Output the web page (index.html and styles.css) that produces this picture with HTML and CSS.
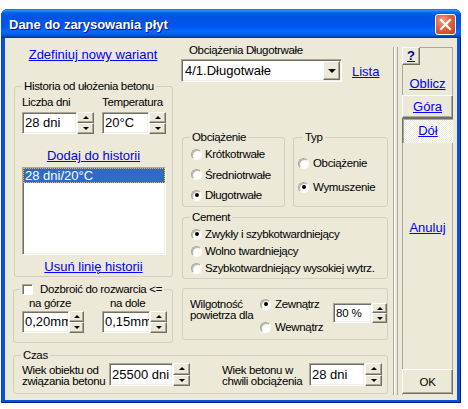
FILE: index.html
```html
<!DOCTYPE html>
<html lang="pl">
<head>
<meta charset="utf-8">
<title>Dane do zarysowania płyt</title>
<link rel="stylesheet" href="styles.css">
</head>
<body>
<div class="window">
  <div class="titlebar">
    <span class="title">Dane do zarysowania płyt</span>
    <span class="close"><svg width="13" height="13" viewBox="0 0 13 13"><path d="M2 2 L11 11 M11 2 L2 11" stroke="#fff" stroke-width="2.2" stroke-linecap="square"/></svg></span>
  </div>
  <div class="client">
    <div class="main">
      <div class="top">
        <div class="leftcol">
          <div class="linkrow"><a class="lnk">Zdefiniuj nowy wariant</a></div>
          <div class="group g-hist">
            <span class="cap">Historia od ułożenia betonu</span>
            <div class="labels"><span class="l1">Liczba dni</span><span>Temperatura</span></div>
            <div class="fields">
              <div class="field f-days"><span class="input">28 dni</span><span class="spin"><i class="up"></i><i class="dn"></i></span></div>
              <div class="field f-temp"><span class="input">20°C</span><span class="spin"><i class="up"></i><i class="dn"></i></span></div>
            </div>
            <a class="lnk hist-link add">Dodaj do historii</a>
            <div class="listbox"><div class="item">28 dni/20°C</div></div>
            <a class="lnk hist-link del">Usuń linię historii</a>
          </div>
          <div class="group g-dozb">
            <span class="cap cap-check"><span class="check"></span><span>Dozbroić do rozwarcia &lt;=</span></span>
            <div class="dozb-row">
              <div class="dcol d1"><span class="dlabel">na górze</span><div class="field f-g"><span class="input">0,20mm</span><span class="spin"><i class="up"></i><i class="dn"></i></span></div></div>
              <div class="dcol d2"><span class="dlabel">na dole</span><div class="field f-d"><span class="input">0,15mm</span><span class="spin"><i class="up"></i><i class="dn"></i></span></div></div>
            </div>
          </div>
        </div>
        <div class="midcol">
          <div class="mlabel">Obciążenia Długotrwałe</div>
          <div class="comborow">
            <div class="combo"><span class="ctext">4/1.Długotwałe</span><span class="cbtn"><i></i></span></div>
            <a class="lnk lista">Lista</a>
          </div>
          <div class="grow2">
            <div class="group g-obc">
              <span class="cap">Obciążenie</span>
              <div class="opts">
                <div class="opt"><span class="radio"></span>Krótkotrwałe</div>
                <div class="opt"><span class="radio"></span>Średniotrwałe</div>
                <div class="opt"><span class="radio on"></span>Długotrwałe</div>
              </div>
            </div>
            <div class="group g-typ">
              <span class="cap">Typ</span>
              <div class="opts">
                <div class="opt"><span class="radio"></span>Obciążenie</div>
                <div class="opt"><span class="radio on"></span>Wymuszenie</div>
              </div>
            </div>
          </div>
          <div class="group g-cem">
            <span class="cap">Cement</span>
            <div class="opts">
              <div class="opt"><span class="radio on"></span>Zwykły i szybkotwardniejący</div>
              <div class="opt"><span class="radio"></span>Wolno twardniejący</div>
              <div class="opt"><span class="radio"></span>Szybkotwardniejący wysokiej wytrz.</div>
            </div>
          </div>
          <div class="group g-wilg">
            <div class="wtext">Wilgotność<br>powietrza dla</div>
            <div class="wopts">
              <div class="opt"><span class="radio on"></span>Zewnątrz</div>
              <div class="opt"><span class="radio"></span>Wewnątrz</div>
            </div>
            <div class="field f-w"><span class="input">80 %</span><span class="spin"><i class="up"></i><i class="dn"></i></span></div>
          </div>
        </div>
      </div>
      <div class="group g-czas">
        <span class="cap">Czas</span>
        <div class="ctext1">Wiek obiektu od<br>związania betonu</div>
        <div class="field f-c1"><span class="input">25500 dni</span><span class="spin"><i class="up"></i><i class="dn"></i></span></div>
        <div class="ctext2">Wiek betonu w<br>chwili obciążenia</div>
        <div class="field f-c2"><span class="input">28 dni</span><span class="spin"><i class="up"></i><i class="dn"></i></span></div>
      </div>
    </div>
    <div class="sep"></div>
    <div class="panel">
      <span class="qbtn">?</span>
      <a class="lnk plink oblicz">Oblicz</a>
      <span class="pbtn gora"><a class="lnk">Góra</a></span>
      <span class="pbtn dol"><a class="lnk">Dół</a></span>
      <a class="lnk plink anuluj">Anuluj</a>
      <span class="pbtn ok">OK</span>
    </div>
  </div>
</div>
</body>
</html>
```
FILE: styles.css
```css
* { box-sizing: border-box; }
body { margin: 0; background: #fff; font-family: "Liberation Sans", Arial, sans-serif; }

.window {
  margin: 9px 0 0 1px;
  width: 460px;
  height: 394px;
  display: flex;
  flex-direction: column;
  background: #0652E0;
  border-radius: 7px 7px 0 0;
  box-shadow: inset 1px 0 #0A3FC4, inset -1px 0 #00138C, inset 0 -1px #00138C;
}
.titlebar {
  height: 29px;
  display: flex;
  align-items: center;
  padding: 0 5px 0 8px;
  border-radius: 7px 7px 0 0;
  background: linear-gradient(to bottom, #0058EE 0%, #3593FF 4%, #288EFF 6%, #127DFF 8%, #036FFC 10%, #0262EE 14%, #0057E5 20%, #0054E3 24%, #0055EB 56%, #005BF5 66%, #026AFE 76%, #0062EF 86%, #0052D6 92%, #0040AB 96%, #003092 100%);
}
.title {
  flex: 1;
  color: #fff;
  font: bold 13px "Liberation Sans", Arial, sans-serif;
  text-shadow: 1px 1px #0F1089;
  padding-top: 2px;
}
.close {
  width: 21px;
  height: 21px;
  border: 1px solid #fff;
  border-radius: 3px;
  background: radial-gradient(circle at 35% 30%, #F0A088 0%, #E0603A 45%, #C8401C 100%);
  display: flex;
  align-items: center;
  justify-content: center;
  margin-top: 1px;
}
.client {
  flex: 1;
  margin: 0 4px 3px 4px;
  background: #ECE9D8;
  display: flex;
  font: 11.5px/16px "Liberation Sans", Arial, sans-serif;
  letter-spacing: -0.35px;
  color: #000;
}

.lnk { color: #0000FF; text-decoration: underline; font: 13px/16px "Liberation Sans", Arial, sans-serif; letter-spacing: 0; cursor: pointer; }

.main { width: 388px; display: flex; flex-direction: column; }
.top { display: flex; height: 305px; }
.leftcol { width: 168px; padding-left: 8px; display: flex; flex-direction: column; }
.linkrow { height: 48px; padding-top: 9px; text-align: center; }

.group { position: relative; border: 1px solid #D0D0BF; border-radius: 3px; }
.cap {
  position: absolute;
  top: -8px;
  left: 7px;
  padding: 0 2px;
  background: #ECE9D8;
  line-height: 15px;
  white-space: nowrap;
}

/* inputs */
.field { display: flex; height: 22px; }
.input {
  flex: 1;
  min-width: 0;
  background: #fff;
  border: 1px solid;
  border-color: #ACA899 #fff #fff #ACA899;
  box-shadow: inset 1px 1px #716F64, inset -1px -1px #F1EFE2;
  font: 13px/20px "Liberation Sans", Arial, sans-serif;
  letter-spacing: 0;
  padding-left: 2px;
  white-space: nowrap;
  overflow: hidden;
}
.spin { display: flex; flex-direction: column; width: 17px; flex: none; }
.spin i {
  flex: 1;
  display: flex;
  align-items: center;
  justify-content: center;
  background: #ECE9D8;
  border: 1px solid;
  border-color: #fff #716F64 #716F64 #fff;
  box-shadow: inset -1px -1px #ACA899;
}
.spin i::before { content: ""; border-left: 3px solid transparent; border-right: 3px solid transparent; }
.spin .up::before { border-bottom: 3px solid #000; }
.spin .dn::before { border-top: 3px solid #000; }

/* historia */
.g-hist { margin-left: 1px; width: 159px; height: 191px; padding: 7px 0 0 7px; display: flex; flex-direction: column; }
.labels { display: flex; height: 16px; }
.l1 { width: 80px; }
.fields { margin-top: 2px; display: flex; }
.f-days { width: 72px; }
.f-temp { width: 64px; margin-left: 8px; }
.hist-link { display: block; margin-left: -7px; text-align: center; }
.add { margin-top: 14px; }
.listbox {
  margin-top: 3px;
  width: 144px;
  height: 88px;
  background: #fff;
  border: 1px solid;
  border-color: #ACA899 #fff #fff #ACA899;
  box-shadow: inset 1px 1px #716F64, inset -1px -1px #F1EFE2;
  padding: 0;
}
.item {
  height: 15px;
  background: #316AC5;
  color: #fff;
  border: 1px dotted #E8B868;
  font: 13px/13px "Liberation Sans", Arial, sans-serif;
  letter-spacing: 0;
  padding-left: 1px;
}
.del { margin-top: 4px; }

/* dozbroic */
.g-dozb { margin-top: 12px; width: 160px; height: 54px; }
.cap-check { display: flex; align-items: center; left: 6px; }
.check {
  width: 11px;
  height: 11px;
  background: #fff;
  border: 1px solid;
  border-color: #ACA899 #fff #fff #ACA899;
  box-shadow: inset 1px 1px #716F64;
  margin-right: 7px;
}
.dozb-row { display: flex; padding-top: 6px; padding-left: 8px; }
.dcol { display: flex; flex-direction: column; }
.dlabel { line-height: 15px; }
.d1 { width: 62px; }
.d1 .dlabel { padding-left: 7px; }
.d2 { width: 65px; margin-left: 18px; }
.d2 .dlabel { padding-left: 8px; }
.f-g .spin { width: 15px; }

/* mid column */
.midcol { margin-left: 8px; width: 207px; display: flex; flex-direction: column; }
.mlabel { height: 21px; padding: 4px 0 0 8px; }
.comborow { display: flex; }
.combo {
  width: 161px;
  height: 23px;
  display: flex;
  background: #fff;
  border: 1px solid;
  border-color: #ACA899 #fff #fff #ACA899;
  box-shadow: inset 1px 1px #716F64, inset -1px -1px #F1EFE2;
  padding: 1px 1px 1px 3px;
}
.ctext { flex: 1; font: 13px/19px "Liberation Sans", Arial, sans-serif; letter-spacing: 0; }
.cbtn {
  width: 17px;
  background: #ECE9D8;
  border: 1px solid;
  border-color: #fff #716F64 #716F64 #fff;
  box-shadow: inset -1px -1px #ACA899;
  display: flex;
  align-items: center;
  justify-content: center;
}
.cbtn i { border-left: 4px solid transparent; border-right: 4px solid transparent; border-top: 4px solid #000; }
.lista { margin-left: 10px; padding-top: 5px; }

.grow2 { display: flex; margin-top: 55px; margin-left: 1px; }
.g-obc { width: 103px; height: 70px; }
.g-typ { width: 95px; height: 70px; margin-left: 8px; }
.g-typ .cap { left: 9px; }
.opts { display: flex; flex-direction: column; }
.opt { display: flex; align-items: center; height: 16px; white-space: nowrap; }
.radio {
  flex: none;
  width: 11px;
  height: 11px;
  border-radius: 50%;
  background: radial-gradient(circle at 60% 60%, #fff 45%, #ECEAE0 100%);
  border: 1px solid;
  border-color: #ACA899 #fff #fff #ACA899;
  box-shadow: inset 1px 1px #B8B5A6;
  margin-right: 3px;
  display: flex;
  align-items: center;
  justify-content: center;
}
.radio.on::after { content: ""; width: 4px; height: 4px; border-radius: 50%; background: #000; }
.g-obc .opts { padding: 8px 0 0 8px; gap: 4.5px; }
.g-typ .opts { padding: 17px 0 0 4px; gap: 8px; }
.g-typ .radio { margin-right: 4px; }
.g-cem { margin-top: 10px; margin-left: 1px; width: 206px; height: 62px; }
.g-cem .opts { padding: 8px 0 0 8px; gap: 1px; }
.g-wilg { margin-top: 9px; margin-left: 1px; width: 206px; height: 52px; display: flex; align-items: flex-start; }
.wtext { width: 77px; padding: 10px 0 0 7px; line-height: 11px; white-space: nowrap; }
.wopts { width: 73px; display: flex; flex-direction: column; gap: 7px; padding-top: 7px; }
.wopts .radio { margin-right: 4px; }
.f-w { width: 54px; height: 20px; margin-top: 14px; }
.f-w .input { font: 11.5px/18px "Liberation Sans", Arial, sans-serif; letter-spacing: -0.2px; }
.f-w .spin { width: 15px; }

/* czas */
.g-czas { margin: 12px 0 0 8px; width: 375px; height: 39px; display: flex; align-items: flex-start; padding: 7px 0 0 8px; }
.g-czas .field { height: 23px; }
.g-czas .input { line-height: 21px; }
.ctext1, .ctext2 { width: 87px; line-height: 11px; margin-top: 2px; white-space: nowrap; }
.f-c1 { width: 81px; }
.ctext2 { margin-left: 32px; }
.f-c2 { width: 73px; }

/* right side */
.sep {
  width: 5px;
  height: 348px;
  margin-top: 9px;
  border-left: 1px solid #ACA899;
  border-right: 1px solid #ACA899;
  box-shadow: inset 1px 0 #fff;
}
.panel {
  width: 51px;
  height: 348px;
  margin: 9px 0 0 4px;
  display: flex;
  flex-direction: column;
  box-shadow: inset 1px 0 #ACA899, inset -1px 0 #ACA899, inset 0 1px #ACA899;
}
.qbtn {
  width: 18px;
  height: 18px;
  background: #ECE9D8;
  border: 1px solid;
  border-color: #fff #716F64 #716F64 #fff;
  box-shadow: inset -1px -1px #ACA899;
  color: #00008B;
  font: bold 13px/15px "Liberation Sans", Arial, sans-serif;
  letter-spacing: 0;
  text-decoration: underline;
  text-align: center;
}
.plink { display: block; text-align: center; }
.oblicz { margin-top: 11px; }
.pbtn {
  display: flex;
  align-items: center;
  justify-content: center;
  background: #ECE9D8;
}
.gora {
  margin-top: 3px;
  height: 23px;
  border: 1px solid;
  border-color: #fff #716F64 #716F64 #fff;
  box-shadow: inset -1px -1px #ACA899;
}
.dol {
  height: 25px;
  border-top: 1px solid #716F64;
  border-left: 1px solid #716F64;
  box-shadow: inset 1px 1px #ACA899;
  background: repeating-conic-gradient(#fff 0 25%, #ECE9D8 0 50%) 0 0 / 2px 2px;
}
.anuluj { margin-top: 77px; }
.ok {
  margin-top: auto;
  margin-bottom: 1px;
  height: 25px;
  border: 1px solid;
  border-color: #fff #716F64 #716F64 #fff;
  box-shadow: inset -1px -1px #ACA899;
}
```
